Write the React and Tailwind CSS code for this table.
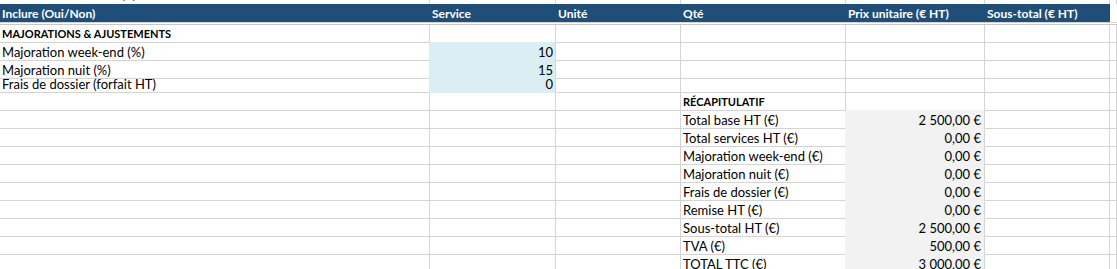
import React from 'react';

// column widths (border included), last one takes what is left
const COLS = ['w-[430px]', 'w-[126px]', 'w-[125px]', 'w-[165px]', 'w-[139px]', 'w-[125px]', 'flex-1'];

const HEADERS = ['Inclure (Oui/Non)', 'Service', 'Unité', 'Qté', 'Prix unitaire (€ HT)', 'Sous-total (€ HT)'];

const RECAP = [
  ['Total base HT (€)', '2 500,00 €'],
  ['Total services HT (€)', '0,00 €'],
  ['Majoration week-end (€)', '0,00 €'],
  ['Majoration nuit (€)', '0,00 €'],
  ['Frais de dossier (€)', '0,00 €'],
  ['Remise HT (€)', '0,00 €'],
  ['Sous-total HT (€)', '2 500,00 €'],
  ['TVA (€)', '500,00 €'],
  ['TOTAL TTC (€)', '3 000,00 €'],
];

const Row = ({ h = 'h-[18px]', cells = [] }) => (
  <div className={`flex ${h}`}>
    {COLS.map((w, i) => {
      const c = cells[i] || {};
      return (
        <div
          key={i}
          className={`${w} shrink-0 flex items-end whitespace-nowrap border-r border-b border-[#d4d4d4] pl-[2px] pr-[2px] pb-[1px] leading-[14px] ${
            c.right ? 'justify-end' : ''
          } ${c.bold ? 'font-bold text-[11px]' : ''} ${c.cls || ''}`}
        >
          {c.t}
        </div>
      );
    })}
  </div>
);

const blue = { cls: 'bg-[#daeef3] border-b-[#daeef3]', right: true };
const gray = { cls: 'bg-[#f2f2f2] border-b-[#f2f2f2] pr-[3px]', right: true };

export default function App() {
  return (
    <div className="h-[269px] w-[1117px] overflow-hidden bg-white font-[Lato,sans-serif] text-[13px] text-black">
      {/* previous row, mostly scrolled out of view */}
      <div className="flex h-[4px]">
        {COLS.map((w, i) => (
          <div key={i} className={`${w} shrink-0 flex items-end overflow-hidden whitespace-nowrap border-r border-[#d4d4d4] pl-[2px] pb-[3px] leading-[14px]`}>
            {i === 0 ? 'Remise commerciale (€)' : ''}
          </div>
        ))}
      </div>

      <div className="flex h-[18px]">
        {COLS.map((w, i) =>
          i < HEADERS.length ? (
            <div key={i} className={`${w} shrink-0 flex items-end bg-[#1f4e78] pl-[2px] pb-[1px] leading-[14px] text-[12px] font-bold text-white whitespace-nowrap`}>
              {HEADERS[i]}
            </div>
          ) : (
            <div key={i} className={`${w} shrink-0 bg-white`} />
          )
        )}
      </div>
      <div className="h-[1px] bg-[#d4d4d4]" />
      <div className="h-[1px] bg-white" />
      <div className="h-[1px] bg-[#c8c8c8]" />

      <Row cells={[{ t: 'MAJORATIONS & AJUSTEMENTS', bold: true }, { cls: 'border-b-[#daeef3]' }]} />
      <Row cells={[{ t: 'Majoration week-end (%)', cls: 'border-r-[#daeef3]' }, { ...blue, t: '10' }]} />
      <Row cells={[{ t: 'Majoration nuit (%)', cls: 'border-r-[#daeef3]' }, { ...blue, t: '15' }]} />
      <Row h="h-[14px]" cells={[{ t: 'Frais de dossier (forfait HT)', cls: 'border-r-[#daeef3]' }, { ...blue, t: '0' }]} />
      <Row cells={[{}, {}, {}, { t: 'RÉCAPITULATIF', bold: true }, { cls: 'border-b-[#f2f2f2]' }]} />
      {RECAP.map(([label, value]) => (
        <Row key={label} cells={[{}, {}, {}, { t: label, cls: 'border-r-[#f2f2f2]' }, { ...gray, t: value }]} />
      ))}
    </div>
  );
}
